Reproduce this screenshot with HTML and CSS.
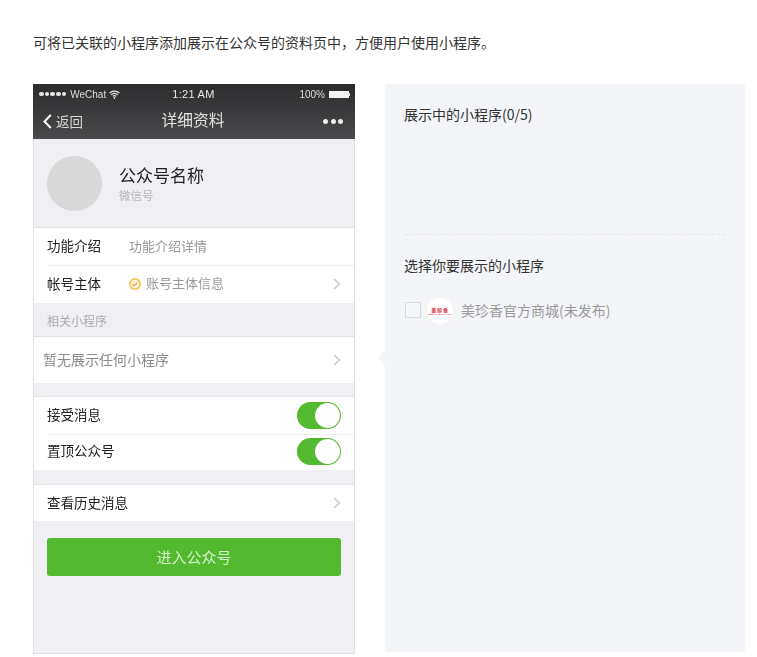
FILE: index.html
```html
<!DOCTYPE html>
<html lang="zh">
<head>
<meta charset="utf-8">
<title>小程序展示</title>
<link rel="stylesheet" href="styles.css">
</head>
<body>
<main class="page">
  <p class="intro">可将已关联的小程序添加展示在公众号的资料页中，方便用户使用小程序。</p>
  <div class="columns">
    <section class="phone">
      <header class="phone-head">
        <div class="status">
          <div class="status-left">
            <span class="signal"><i></i><i></i><i></i><i></i><i></i></span>
            <span class="carrier">WeChat</span>
            <svg class="wifi" width="11" height="9" viewBox="0 0 11 9"><path d="M0.600 3C3.300 .6 7.700 .6 10.400 3M2.200 4.800c1.900-1.600 4.700-1.600 6.600 0M3.800 6.400c1-.8 2.400-.8 3.400 0" fill="none" stroke="#e8e8e8" stroke-width="1.200"/><circle cx="5.500" cy="7.900" r=".9" fill="#e8e8e8"/></svg>
          </div>
          <span class="time">1:21 AM</span>
          <div class="status-right">
            <span>100%</span>
            <span class="battery"></span>
          </div>
        </div>
        <div class="nav">
          <div class="back">
            <svg width="9" height="15" viewBox="0 0 9 15"><path d="M7.800 1L1.500 7.500 7.800 14" fill="none" stroke="#fff" stroke-width="2"/></svg>
            <span class="back-text">返回</span>
          </div>
          <span class="nav-title">详细资料</span>
          <span class="more"><i></i><i></i><i></i></span>
        </div>
      </header>
      <div class="profile">
        <div class="avatar"></div>
        <div class="profile-text">
          <div class="profile-name">公众号名称</div>
          <div class="profile-id">微信号</div>
        </div>
      </div>
      <div class="group">
        <div class="row row-info">
          <span class="label">功能介绍</span>
          <span class="value">功能介绍详情</span>
        </div>
        <div class="row row-info row-sep">
          <span class="label">帐号主体</span>
          <svg class="verified" width="12" height="12" viewBox="0 0 12 12"><circle cx="6" cy="6" r="6" fill="#f5c35a"/><circle cx="6" cy="6" r="4.300" fill="#fdf3dc"/><path d="M3.500 6l1.800 1.800 3.200-3.200" fill="none" stroke="#eeb139" stroke-width="1.300"/></svg>
          <span class="value">账号主体信息</span>
          <svg class="chev" width="8" height="12" viewBox="0 0 8 12"><path d="M1 1l5.500 5L1 11" fill="none" stroke="#c7c7cc" stroke-width="1.400"/></svg>
        </div>
      </div>
      <div class="section-label">相关小程序</div>
      <div class="group group-line">
        <div class="row row-tall">
          <span class="empty">暂无展示任何小程序</span>
          <svg class="chev" width="8" height="12" viewBox="0 0 8 12"><path d="M1 1l5.500 5L1 11" fill="none" stroke="#c7c7cc" stroke-width="1.400"/></svg>
        </div>
      </div>
      <div class="group group-line gap-13">
        <div class="row row-switch">
          <span class="label plain">接受消息</span>
          <span class="switch"><i></i></span>
        </div>
        <div class="row row-switch row-sep">
          <span class="label plain">置顶公众号</span>
          <span class="switch"><i></i></span>
        </div>
      </div>
      <div class="group group-line gap-14">
        <div class="row row-history">
          <span class="label plain">查看历史消息</span>
          <svg class="chev" width="8" height="12" viewBox="0 0 8 12"><path d="M1 1l5.500 5L1 11" fill="none" stroke="#c7c7cc" stroke-width="1.400"/></svg>
        </div>
      </div>
      <div class="enter">进入公众号</div>
    </section>
    <section class="panel">
      <span class="panel-arrow"></span>
      <div class="panel-top">
        <h2 class="panel-title">展示中的小程序(0/5)</h2>
      </div>
      <h2 class="panel-title panel-title-second">选择你要展示的小程序</h2>
      <div class="option">
        <span class="checkbox"></span>
        <span class="logo"><b>美珍香</b><small>BEE CHENG HIANG</small></span>
        <span class="option-name">美珍香官方商城(未发布)</span>
      </div>
    </section>
  </div>
</main>
</body>
</html>
```
FILE: styles.css
```css
* { box-sizing: border-box; }
html, body { margin: 0; padding: 0; background: #fff; }
body { font-family: "Noto Sans CJK SC", "Liberation Sans", sans-serif; color: #333; overflow: hidden; height: 657px; }
i { display: block; }

.page { padding: 32px 12px 0 33px; }
.intro { margin: 0 0 32px; font-size: 14px; line-height: 20px; color: #333; }
.columns { display: flex; gap: 30px; align-items: flex-start; }

.phone { width: 322px; height: 570px; background: #efeff4; border: 1px solid #dfdfe2; border-top: 0; display: flex; flex-direction: column; flex: none; filter: blur(.35px); }

.phone-head { height: 55px; margin: 0 -1px; background: linear-gradient(#2c2c2e, #4a4a4d); color: #fff; flex: none; }
.status { height: 20px; display: grid; grid-template-columns: 1fr auto 1fr; align-items: center; padding: 0 5px 0 6px; font-family: "Liberation Sans", sans-serif; font-size: 10px; color: #ddd; }
.status-left { display: flex; align-items: center; gap: 3px; }
.status-right { display: flex; align-items: center; justify-content: flex-end; gap: 4px; }
.signal { display: flex; gap: 1.200px; margin-right: 1px; }
.signal i { width: 4.500px; height: 4.500px; border-radius: 50%; background: #e8e8e8; }
.time { font-size: 11px; color: #e8e8e8; letter-spacing: .3px; margin-right: 2px; }
.battery { width: 20px; height: 7px; background: #f4f4f4; margin-right: 1px; position: relative; }
.battery::after { content: ""; position: absolute; left: 20px; top: 2px; width: 1px; height: 3px; background: #ddd; }

.nav { height: 35px; display: grid; grid-template-columns: 1fr auto 1fr; align-items: center; padding: 0 12px 0 10px; }
.back { display: flex; align-items: center; gap: 4px; font-size: 13.500px; color: #d8d8d8; }
.back-text { margin-bottom: 2px; }
.nav-title { font-size: 15.750px; color: #e2e2e2; margin-bottom: 4px; }
.more { display: flex; gap: 2.500px; justify-content: flex-end; }
.more i { width: 5px; height: 5px; border-radius: 50%; background: #ececec; }

.profile { height: 89px; padding-left: 13px; display: flex; align-items: center; gap: 17px; flex: none; border-bottom: 1px solid #e1e1e4; }
.avatar { width: 55px; height: 55px; border-radius: 50%; background: #d8d8d8; flex: none; }
.profile-name { font-size: 17px; line-height: 24px; color: #222; }
.profile-id { font-size: 11.500px; line-height: 16px; color: #b4b4b4; }

.group { background: #fff; flex: none; }
.group-line { border-top: 1px solid #e1e1e4; }
.gap-13 { margin-top: 13px; }
.gap-14 { margin-top: 14px; }
.row { display: flex; align-items: center; padding-left: 13px; padding-right: 13px; position: relative; }
.row-info { height: 37px; }
.row-info.row-sep { height: 38px; }
.row-tall { height: 46px; padding-left: 9px; }
.row-switch { height: 36.500px; }
.row-history { height: 36px; }
.row-sep::before { content: ""; position: absolute; left: 13px; right: 0; top: 0; height: 1px; background: #eeeeee; }
.label { width: 82px; font-size: 13.500px; color: #222; flex: none; margin-bottom: 3px; }
.label.plain { width: auto; }
.value { font-size: 13px; color: #999; margin-bottom: 3px; }
.verified { margin-right: 5px; flex: none; }
.empty { font-size: 14px; color: #8c8c8c; margin-bottom: 3px; }
.chev { margin-left: auto; flex: none; }

.section-label { height: 33px; padding-left: 13px; font-size: 12px; line-height: 35px; color: #aaa; flex: none; }

.switch { margin-left: auto; width: 44px; height: 27px; border-radius: 14px; background: #53ba2f; position: relative; }
.switch i { position: absolute; right: 1px; top: 1px; width: 25px; height: 25px; border-radius: 50%; background: #fff; }

.enter { margin: 17px 13px 0; height: 38px; border-radius: 3px; background: #53ba2f; color: #d6f0cd; text-align: center; font-size: 15px; line-height: 37px; flex: none; }

.panel { width: 360px; height: 568px; background: #f4f5f9; padding: 0 20px; position: relative; flex: none; }
.panel-arrow { position: absolute; left: -7px; top: 266px; width: 0; height: 0; border-top: 8px solid transparent; border-bottom: 8px solid transparent; border-right: 7px solid #f4f5f9; }
.panel-top { height: 151px; padding-top: 20px; border-bottom: 1px dashed #e4e5ea; }
.panel-title { margin: 0 0 0 -1px; font-size: 14px; font-weight: 400; line-height: 20px; color: #333; }
.panel-title-second { margin-top: 20px; }
.option { display: flex; align-items: center; margin-top: 23px; }
.checkbox { width: 16px; height: 16px; border: 1px solid #d9dae0; background: #f6f7fa; flex: none; margin-bottom: 2px; }
.logo { width: 26px; height: 26px; margin-left: 6px; border-radius: 50%; background: #fff; display: flex; flex-direction: column; align-items: center; justify-content: center; color: #d8232a; flex: none; overflow: hidden; }
.logo b { font-size: 5px; line-height: 6px; font-weight: 700; letter-spacing: .8px; }
.logo small { font-size: 2.500px; line-height: 3px; font-family: "Liberation Sans", sans-serif; white-space: nowrap; }
.option-name { margin-left: 8px; font-size: 14px; color: #999; margin-bottom: 2px; }
```
